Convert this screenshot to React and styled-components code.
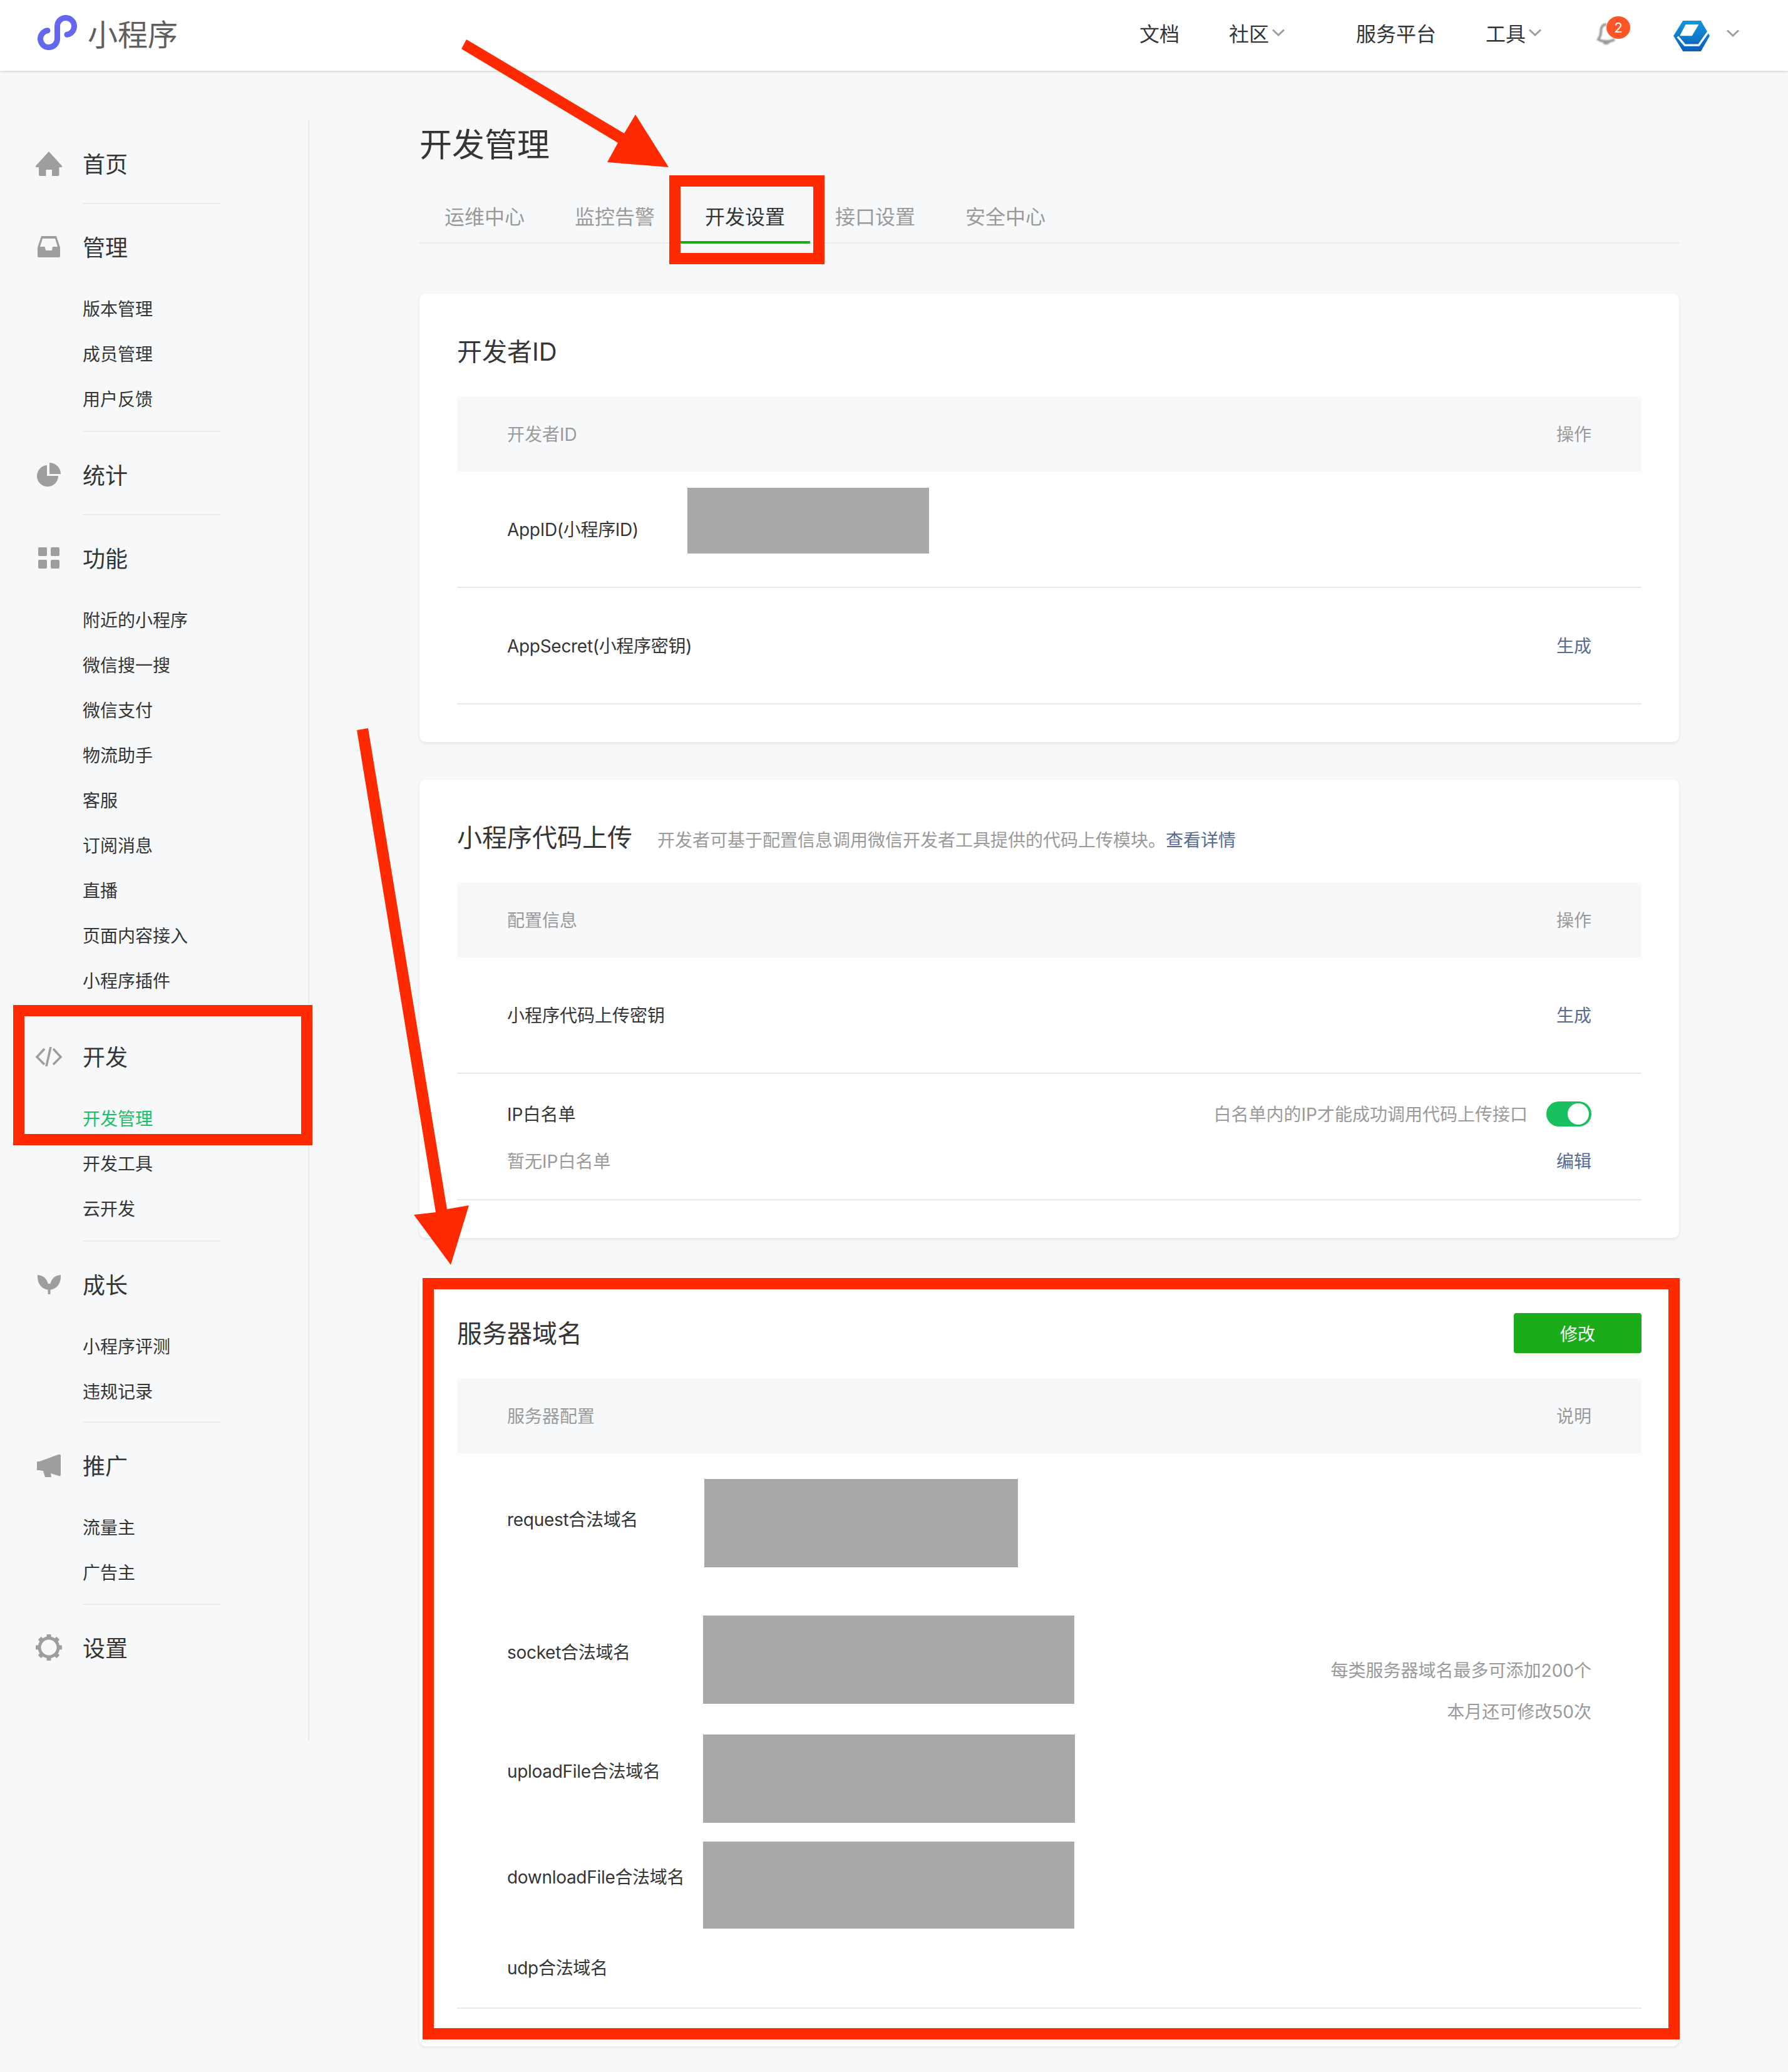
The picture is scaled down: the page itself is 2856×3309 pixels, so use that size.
import styled, { createGlobalStyle } from "styled-components"

const GlobalStyle = createGlobalStyle`
    html, body {
        margin : 0;
        padding : 0;
    }
    body {
        background : #f6f8f9;
        color : #353535;
        font-family : Inter, "Noto Sans CJK SC", sans-serif;
    }
`
const Page = styled.div`
    position : relative;
    width : 2856px;
    min-height : 3309px;
    background : #f6f8f9;
    overflow : hidden;
`
const Header = styled.header`
    position : relative;
    height : 113px;
    box-sizing : border-box;
    background : #fff;
    box-shadow : 0 1px 4px rgba(0,0,0,0.18);
    display : flex;
    align-items : center;
    justify-content : space-between;
    padding : 0 78px 10px 60px;
`
const Brand = styled.div`
    display : flex;
    align-items : center;
    gap : 17px;
    font-size : 48px;
    color : #5f5f5f;
`
const Nav = styled.nav`
    display : flex;
    align-items : center;
`
const NavItem = styled.div`
    display : flex;
    align-items : center;
    gap : 5px;
    font-size : 32px;
    color : #353535;
    margin-left : ${p => p.$gap}px;
`
const BellWrap = styled.div`
    position : relative;
    width : 32px;
    height : 36px;
    margin : 4px 0 0 88px;
    svg {
        filter : blur(1.2px);
    }
`
const Badge = styled.span`
    position : absolute;
    left : 16px;
    top : -10px;
    width : 38px;
    height : 36px;
    border-radius : 50%;
    background : #fe5427;
    color : #fff;
    font-size : 22px;
    display : flex;
    align-items : center;
    justify-content : center;
`
const Account = styled.div`
    display : flex;
    align-items : center;
    gap : 27px;
    margin-left : 91px;
    svg:first-child {
        margin-top : 12px;
    }
    svg:last-child {
        margin-top : 3px;
    }
`
const Layout = styled.div`
    display : flex;
    align-items : flex-start;
    padding-bottom : 42px;
`
const Sidebar = styled.aside`
    flex : none;
    width : 494px;
    height : 2587px;
    margin-top : 80px;
    box-sizing : border-box;
    border-right : 2px solid #e8eaec;
`
const Group = styled.section`
    padding : 32px 0 ${p => 15 - (p.$trim || 0)}px;
`
const GroupTitle = styled.div`
    display : flex;
    align-items : center;
    height : 72px;
    padding-bottom : 12px;
    font-size : 36px;
`
const IconSlot = styled.span`
    width : 108px;
    margin-left : 24px;
    display : flex;
    justify-content : center;
    color : #9e9e9e;
`
const TitleText = styled.span`
    margin-top : -3px;
`
const SubList = styled.div`
    padding-top : 15px;
`
const SubItem = styled.div`
    height : 72px;
    line-height : 74px;
    padding-left : 132px;
    font-size : 28px;
    color : ${p => (p.$active ? "#17c264" : "#353535")};
`
const Divider = styled.div`
    width : 220px;
    height : 2px;
    margin-left : 132px;
    background : #e8eaec;
`
const Main = styled.main`
    flex : none;
    width : 2012px;
    margin : 80px 0 0 176px;
`
const PageTitle = styled.h1`
    margin : 0 0 34px;
    height : 74px;
    line-height : 78px;
    font-size : 52px;
    font-weight : 400;
`
const Tabs = styled.div`
    display : flex;
    height : 88px;
    box-sizing : border-box;
    border-bottom : 2px solid #e8eaec;
    margin-bottom : 80px;
`
const Tab = styled.div`
    width : 208px;
    height : 88px;
    box-sizing : border-box;
    padding-top : 2px;
    display : flex;
    align-items : center;
    justify-content : center;
    font-size : 32px;
    color : ${p => (p.$active ? "#353535" : "#9a9a9a")};
    border-bottom : 4px solid ${p => (p.$active ? "#1aad19" : "transparent")};
`
const Card = styled.section`
    background : #fff;
    border-radius : 10px;
    box-shadow : 0 2px 4px rgba(0,0,0,0.09);
    padding : 60px 60px 60px;
    margin-bottom : 60px;
`
const CardHead = styled.div`
    display : flex;
    align-items : center;
    height : 64px;
    margin-bottom : 40px;
`
const CardTitle = styled.h2`
    margin : -5px 0 0;
    font-size : 40px;
    font-weight : 400;
`
const CardDesc = styled.div`
    margin : 6px 0 0 40px;
    font-size : 28px;
    color : #9a9a9a;
`
const Link = styled.a`
    color : #576b95;
    font-size : 28px;
`
const PrimaryButton = styled.div`
    margin-left : auto;
    width : 204px;
    height : 64px;
    border-radius : 4px;
    background : #1aad19;
    color : #fff;
    font-size : 28px;
    display : flex;
    align-items : center;
    justify-content : center;
`
const TableHead = styled.div`
    height : 120px;
    box-sizing : border-box;
    padding : 0 80px 2px;
    background : #f6f8f9;
    display : flex;
    align-items : center;
    justify-content : space-between;
    font-size : 28px;
    color : #9a9a9a;
`
const Row = styled.div`
    height : 186px;
    box-sizing : border-box;
    padding : 0 80px 2px;
    display : flex;
    align-items : center;
    font-size : 28px;
    border-bottom : 2px solid #e8eaec;
`
const RowLabel = styled.div`
    flex : none;
    width : ${p => p.$width || 288}px;
    letter-spacing : ${p => (p.$tight ? "-0.3px" : "normal")};
`
const Mask = styled.div`
    flex : none;
    width : ${p => p.$width}px;
    height : ${p => p.$height}px;
    background : #a9a9a9;
    margin-left : ${p => p.$left || 0}px;
`
const AppIdMask = styled(Mask)`
    align-self : flex-start;
    margin-top : 26px;
`
const RowAction = styled(Link)`
    margin-left : auto;
`
const IpRow = styled.div`
    box-sizing : border-box;
    height : 202px;
    padding : 44px 80px 0;
    font-size : 28px;
    border-bottom : 2px solid #e8eaec;
    display : flex;
    flex-direction : column;
    gap : 34px;
`
const IpLine = styled.div`
    height : 40px;
    display : flex;
    align-items : center;
    justify-content : space-between;
`
const IpLabel = styled.span`
    margin-bottom : 3px;
`
const Hint = styled.div`
    color : #9a9a9a;
`
const SwitchHint = styled(Hint)`
    margin-bottom : 3px;
`
const SwitchBox = styled.div`
    display : flex;
    align-items : center;
    gap : 30px;
`
const Toggle = styled.span`
    position : relative;
    width : 72px;
    height : 40px;
    border-radius : 20px;
    background : #18c060;
    &::after {
        content : "";
        position : absolute;
        right : 4px;
        top : 3px;
        width : 34px;
        height : 34px;
        border-radius : 50%;
        background : #fff;
    }
`
const DomainBody = styled.div`
    display : flex;
    justify-content : space-between;
    font-size : 28px;
    border-bottom : 2px solid #e8eaec;
`
const DomainRows = styled.div`
    padding : 41px 0 0 80px;
`
const DomainRow = styled.div`
    display : flex;
    align-items : flex-start;
    height : ${p => p.$height}px;
`
const DomainLabel = styled.div`
    flex : none;
    width : 313px;
    line-height : 40px;
    letter-spacing : -0.3px;
    margin-top : ${p => p.$top}px;
`
const QuotaNote = styled.div`
    padding : 314px 80px 0 0;
    text-align : right;
    line-height : 66px;
    color : #9a9a9a;
`
const AnnotationBox = styled.div`
    position : absolute;
    left : ${p => p.$x}px;
    top : ${p => p.$y}px;
    width : ${p => p.$w}px;
    height : ${p => p.$h}px;
    box-sizing : border-box;
    border : 18px solid #ff2a00;
`
const ArrowLayer = styled.svg`
    position : absolute;
    left : 0;
    top : 0;
    pointer-events : none;
`

const MiniLogo = () => (
    <svg width="63" height="56" viewBox="0 0 63 56" fill="none" stroke="#6467f0" strokeWidth="9" strokeLinecap="round">
        <path d="M16 24.7A13.5 13.5 0 1 0 31.5 38V18A13.5 13.5 0 1 1 47 31.3" />
    </svg>
)
const Chevron = () => (
    <svg width="20" height="12" viewBox="0 0 20 12" fill="none" stroke="#9e9e9e" strokeWidth="3">
        <path d="M1 1.5l9 8.5 9-8.5" />
    </svg>
)
const Bell = () => (
    <svg width="32" height="36" viewBox="0 0 32 36" fill="none" stroke="#9a9a9a" strokeWidth="4">
        <path d="M16 3C9 3 7 9 7 16c0 5-2 8-4 11 3 2 8 3 13 3s10-1 13-3" />
        <path d="M12 31c1 3 6 3 8 0" />
    </svg>
)
const AccountLogo = () => (
    <svg width="58" height="49" viewBox="0 0 172 145">
        <defs>
            <linearGradient id="hexFill" x1="0" y1="0" x2="0" y2="1">
                <stop offset="0" stopColor="#1296e0" />
                <stop offset="1" stopColor="#0a5fb8" />
            </linearGradient>
        </defs>
        <path d="M0 72L45 0h85l42 72-42 73H45z" fill="url(#hexFill)" />
        <path d="M30 72L58 18h62L88 72z" fill="#fff" />
        <path d="M20 76l34 40h66l48-68" fill="none" stroke="#fff" strokeWidth="10" />
    </svg>
)
const HomeIcon = () => (
    <svg width="42" height="39" viewBox="0 0 42 39" fill="currentColor">
        <path d="M21 0l21 23v2h-4.500v12a2 2 0 0 1-2 2H26V29h-9.500v10H7a2 2 0 0 1-2-2V25H0v-2z" />
    </svg>
)
const InboxIcon = () => (
    <svg width="36" height="34" viewBox="0 0 36 34" fill="currentColor" fillRule="evenodd">
        <path d="M6 0h24l6 18v14a2 2 0 0 1-2 2H2a2 2 0 0 1-2-2V18zM8 4h20l4 13h-8l-1 6H13l-1.500-6H4z" />
    </svg>
)
const PieIcon = () => (
    <svg width="38" height="38" viewBox="0 0 38 38" fill="currentColor">
        <path d="M16 4.100V21h18A17 17 0 1 1 16 4.100z" />
        <path d="M20 0a18 18 0 0 1 18 18H20z" />
    </svg>
)
const GridIcon = () => (
    <svg width="34" height="34" viewBox="0 0 34 34" fill="currentColor">
        <rect width="14" height="14" rx="2" />
        <rect x="20" width="14" height="14" rx="2" />
        <rect y="20" width="14" height="14" rx="2" />
        <rect x="20" y="20" width="14" height="14" rx="2" />
    </svg>
)
const CodeIcon = () => (
    <svg width="44" height="32" viewBox="0 0 44 32" fill="none" stroke="currentColor" strokeWidth="3.600">
        <path d="M15 4L3 17l12 12" />
        <path d="M25 1l-7 31" />
        <path d="M29 4l12 13-12 12" />
    </svg>
)
const SproutIcon = () => (
    <svg width="37" height="31" viewBox="0 0 37 31" fill="currentColor">
        <path d="M0 0C11 1 18 8 17.500 24C6 23-1 13 0 0z" />
        <path d="M37 0C26 1 19 8 19.500 24C31 23 38 13 37 0z" />
        <rect x="16.500" y="14" width="4" height="17" />
    </svg>
)
const HornIcon = () => (
    <svg width="38" height="37" viewBox="0 0 38 37" fill="currentColor">
        <path d="M0 12h4L34 1q3-1 4 1v31q0 3-3 2l-13-4 1 6H13l-3-10-6-1H0z" />
    </svg>
)
const GearIcon = () => (
    <svg width="42" height="42" viewBox="0 0 42 42" fill="currentColor">
        <circle cx="21" cy="21" r="15" fill="none" stroke="currentColor" strokeWidth="5" />
        {Array(8).fill("").map((_, i) => (
            <rect key={i} x="17.500" y="0" width="7" height="6" rx="1" transform={`rotate(${i * 45} 21 21)`} />
        ))}
    </svg>
)

const menu = [
    { title: "首页", icon: <HomeIcon /> },
    { title: "管理", icon: <InboxIcon />, items: ["版本管理", "成员管理", "用户反馈"] },
    { title: "统计", icon: <PieIcon /> },
    { title: "功能", icon: <GridIcon />, items: ["附近的小程序", "微信搜一搜", "微信支付", "物流助手", "客服", "订阅消息", "直播", "页面内容接入", "小程序插件"] },
    { title: "开发", icon: <CodeIcon />, items: ["开发管理", "开发工具", "云开发"], active: "开发管理" },
    { title: "成长", icon: <SproutIcon />, items: ["小程序评测", "违规记录"], trim: 3 },
    { title: "推广", icon: <HornIcon />, items: ["流量主", "广告主"], trim: 1 },
    { title: "设置", icon: <GearIcon /> },
]
const tabs = ["运维中心", "监控告警", "开发设置", "接口设置", "安全中心"]
const domains = [
    { label: "request合法域名", height: 218, top: 45, mask: 501, left: 2, maskHeight: 141 },
    { label: "socket合法域名", height: 190, top: 39, mask: 593, maskHeight: 141 },
    { label: "uploadFile合法域名", height: 171, top: 39, mask: 594, maskHeight: 141 },
    { label: "downloadFile合法域名", height: 181, top: 37, mask: 593, maskHeight: 139 },
    { label: "udp合法域名", height: 84, top: 1 },
]

export default function App(){
    return(
        <Page>
            <GlobalStyle />
            <Header>
                <Brand>
                    <MiniLogo />
                    小程序
                </Brand>
                <Nav>
                    <NavItem $gap={0}>文档</NavItem>
                    <NavItem $gap={79}>社区<Chevron /></NavItem>
                    <NavItem $gap={114}>服务平台</NavItem>
                    <NavItem $gap={79}>工具<Chevron /></NavItem>
                    <BellWrap>
                        <Bell />
                        <Badge>2</Badge>
                    </BellWrap>
                    <Account>
                        <AccountLogo />
                        <Chevron />
                    </Account>
                </Nav>
            </Header>

            <Layout>
                <Sidebar>
                    {menu.map((group, i) => (
                        <div key={group.title}>
                            <Group $trim={group.trim}>
                                <GroupTitle>
                                    <IconSlot>{group.icon}</IconSlot>
                                    <TitleText>{group.title}</TitleText>
                                </GroupTitle>
                                {group.items && (
                                    <SubList>
                                        {group.items.map(item => (
                                            <SubItem key={item} $active={item === group.active}>{item}</SubItem>
                                        ))}
                                    </SubList>
                                )}
                            </Group>
                            {i < menu.length - 1 && <Divider />}
                        </div>
                    ))}
                </Sidebar>

                <Main>
                    <PageTitle>开发管理</PageTitle>
                    <Tabs>
                        {tabs.map(tab => (
                            <Tab key={tab} $active={tab === "开发设置"}>{tab}</Tab>
                        ))}
                    </Tabs>

                    <Card>
                        <CardHead>
                            <CardTitle>开发者ID</CardTitle>
                        </CardHead>
                        <TableHead>
                            <span>开发者ID</span>
                            <span>操作</span>
                        </TableHead>
                        <Row>
                            <RowLabel $tight>AppID(小程序ID)</RowLabel>
                            <AppIdMask $width={386} $height={105} />
                        </Row>
                        <Row>
                            <RowLabel $tight $width={500}>AppSecret(小程序密钥)</RowLabel>
                            <RowAction>生成</RowAction>
                        </Row>
                    </Card>

                    <Card>
                        <CardHead>
                            <CardTitle>小程序代码上传</CardTitle>
                            <CardDesc>开发者可基于配置信息调用微信开发者工具提供的代码上传模块。<Link>查看详情</Link></CardDesc>
                        </CardHead>
                        <TableHead>
                            <span>配置信息</span>
                            <span>操作</span>
                        </TableHead>
                        <Row>
                            <RowLabel $width={500}>小程序代码上传密钥</RowLabel>
                            <RowAction>生成</RowAction>
                        </Row>
                        <IpRow>
                            <IpLine>
                                <IpLabel>IP白名单</IpLabel>
                                <SwitchBox>
                                    <SwitchHint>白名单内的IP才能成功调用代码上传接口</SwitchHint>
                                    <Toggle />
                                </SwitchBox>
                            </IpLine>
                            <IpLine>
                                <Hint>暂无IP白名单</Hint>
                                <Link>编辑</Link>
                            </IpLine>
                        </IpRow>
                    </Card>

                    <Card>
                        <CardHead>
                            <CardTitle>服务器域名</CardTitle>
                            <PrimaryButton>修改</PrimaryButton>
                        </CardHead>
                        <TableHead>
                            <span>服务器配置</span>
                            <span>说明</span>
                        </TableHead>
                        <DomainBody>
                            <DomainRows>
                                {domains.map(d => (
                                    <DomainRow key={d.label} $height={d.height}>
                                        <DomainLabel $top={d.top}>{d.label}</DomainLabel>
                                        {d.mask && <Mask $width={d.mask} $height={d.maskHeight} $left={d.left} />}
                                    </DomainRow>
                                ))}
                            </DomainRows>
                            <QuotaNote>
                                <div>每类服务器域名最多可添加200个</div>
                                <div>本月还可修改50次</div>
                            </QuotaNote>
                        </DomainBody>
                    </Card>
                </Main>
            </Layout>

            <AnnotationBox $x={1069} $y={280} $w={248} $h={142} />
            <AnnotationBox $x={21} $y={1605} $w={478} $h={224} />
            <AnnotationBox $x={675} $y={2041} $w={2008} $h={1216} />
            <ArrowLayer width="2856" height="3309" viewBox="0 0 2856 3309" fill="#ff2a00">
                <polygon points="745,63 997,213 1015,183 1068,267 970,259 987,228 737,78" />
                <polygon points="570,1166 588,1163 714,1931 749,1925 720,2020 661,1940 696,1936" />
            </ArrowLayer>
        </Page>
    );
}
